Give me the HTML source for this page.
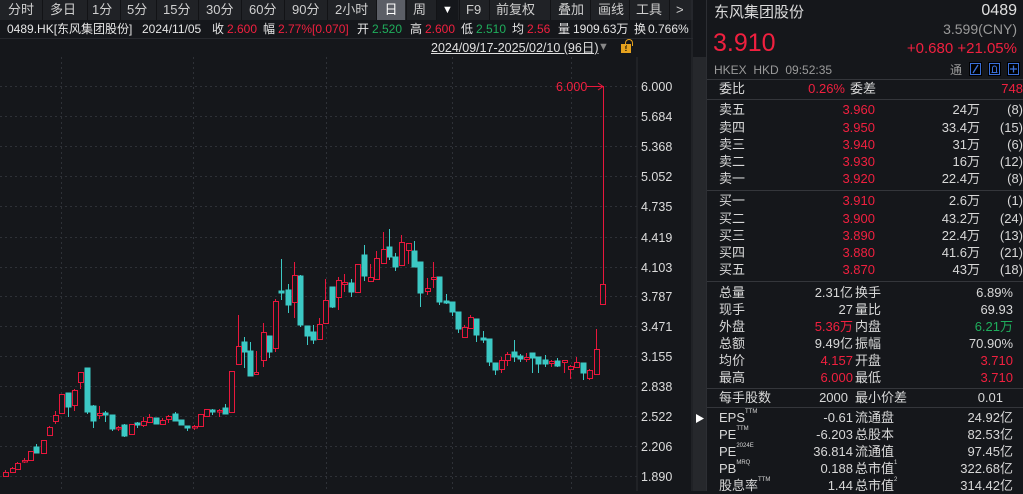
<!DOCTYPE html>
<html><head><meta charset="utf-8"><style>
*{margin:0;padding:0;box-sizing:border-box}
body{width:1023px;height:491px;background:#15171b;overflow:hidden;position:relative;font-family:"Liberation Sans","Noto Sans CJK SC",sans-serif;color:#d8d8d8}
.a{position:absolute;white-space:nowrap}
#tb{position:absolute;left:0;top:0;width:693px;height:20px;background:#202226}
#tb span{position:absolute;top:0;height:20px;line-height:20px;font-size:13px;color:#cfcfcf}
.sep{position:absolute;top:0;width:1px;height:20px;background:#121316}
.r{color:#f0203f}.g{color:#1fae5c}.gr{color:#9a9a9a}
.ib{position:absolute;top:21px;font-size:12px;line-height:16px;color:#e6e6e6;white-space:nowrap}
.ib.r{color:#f0203f}.ib.g{color:#1fae5c}
#ip{position:absolute;left:706px;top:0;width:317px;height:491px;border-left:1px solid #2c2e33;background:#15171b}
#ip .a{font-size:13px;line-height:16px}
.hl{position:absolute;left:0;width:317px;height:1px;background:#34363b}
.rt{text-align:right}
sup{font-size:6px;line-height:6px;vertical-align:top;position:relative;top:-1px}
</style></head><body>
<div id="tb">
<span style="left:8px">分时</span>
<span style="left:50px">多日</span>
<span style="left:92px">1分</span>
<span style="left:127px">5分</span>
<span style="left:163px">15分</span>
<span style="left:206px">30分</span>
<span style="left:249px">60分</span>
<span style="left:292px">90分</span>
<span style="left:335px">2小时</span>
<span style="left:377px;width:28px;background:#5b5e66;text-align:center;color:#fff">日</span>
<span style="left:413px">周</span>
<span style="left:437px;width:21px;text-align:center;background:#15171b;color:#fff;font-size:11px">▼</span>
<span style="left:466px">F9</span>
<span style="left:496px">前复权</span>
<span style="left:558px">叠加</span>
<span style="left:598px">画线</span>
<span style="left:636px">工具</span>
<span style="left:676px">&gt;</span>
<div class="sep" style="left:42px"></div><div class="sep" style="left:87px"></div><div class="sep" style="left:120px"></div><div class="sep" style="left:156px"></div><div class="sep" style="left:198px"></div><div class="sep" style="left:241px"></div><div class="sep" style="left:284px"></div><div class="sep" style="left:327px"></div><div class="sep" style="left:376px"></div><div class="sep" style="left:406px"></div><div class="sep" style="left:436px"></div><div class="sep" style="left:459px"></div><div class="sep" style="left:489px"></div><div class="sep" style="left:550px"></div><div class="sep" style="left:590px"></div><div class="sep" style="left:629px"></div><div class="sep" style="left:669px"></div>
</div>
<div class="ib" style="left:7px">0489.HK[东风集团股份]</div>
<div class="ib" style="left:142px">2024/11/05</div>
<div class="ib" style="left:212px">收</div><div class="ib r" style="left:227px">2.600</div>
<div class="ib" style="left:263px">幅</div><div class="ib r" style="left:278px">2.77%[0.070]</div>
<div class="ib" style="left:357px">开</div><div class="ib g" style="left:372px">2.520</div>
<div class="ib" style="left:410px">高</div><div class="ib r" style="left:425px">2.600</div>
<div class="ib" style="left:461px">低</div><div class="ib g" style="left:476px">2.510</div>
<div class="ib" style="left:512px">均</div><div class="ib r" style="left:527px">2.56</div>
<div class="ib" style="left:558px">量</div><div class="ib" style="left:573px">1909.63万</div>
<div class="ib" style="left:634px">换</div><div class="ib" style="left:648px">0.766%</div>
<div style="position:absolute;left:0;top:38px;width:693px;height:1px;background:#26282d"></div>
<div class="a" style="left:431px;top:40px;font-size:12.5px;line-height:16px;color:#e0e0e0;text-decoration:underline">2024/09/17-2025/02/10 (96日)</div>
<div class="a" style="left:598px;top:41px;font-size:11px;color:#888">▼</div>
<div class="a" style="left:621px;top:44px;width:10px;height:9px;background:#e6a21e;font-size:8px;line-height:9px;text-align:center;color:#000;font-weight:bold">!</div>
<div class="a" style="left:625px;top:39px;width:8px;height:7px;border:1.5px solid #e6a21e;border-bottom:none;border-radius:4px 4px 0 0"></div>

<svg style="position:absolute;left:0;top:0" width="706" height="491">
<rect x="693" y="57" width="13" height="434" fill="#26282c"/>
<path d="M696 414 L704 418.5 L696 423Z" fill="#fff"/>
<line x1="637" y1="57" x2="637" y2="491" stroke="#2a2c31"/>
<line x1="692" y1="0" x2="692" y2="491" stroke="#2a2c31"/>
<g stroke="#2e3137" stroke-dasharray="2,3" stroke-width="1">
<path d="M0 86.5H637M0 116.5H637M0 146.5H637M0 176.5H637M0 206.5H637M0 237.5H637M0 267.5H637M0 296.5H637M0 326.5H637M0 356.5H637M0 386.5H637M0 416.5H637M0 446.5H637M0 476.5H637"/>
<path d="M61.5 57V491M193.5 57V491M326.5 57V491M452.5 57V491M571.5 57V491"/>
</g>
<g font-size="12.5" fill="#dcdcdc" font-family="Liberation Sans,sans-serif">
<text x="641" y="91">6.000</text><text x="641" y="121">5.684</text><text x="641" y="151">5.368</text><text x="641" y="181">5.052</text><text x="641" y="211">4.735</text><text x="641" y="242">4.419</text><text x="641" y="272">4.103</text><text x="641" y="301">3.787</text><text x="641" y="331">3.471</text><text x="641" y="361">3.155</text><text x="641" y="391">2.838</text><text x="641" y="421">2.522</text><text x="641" y="451">2.206</text><text x="641" y="481">1.890</text>
</g>
<text x="556" y="91" font-size="12.5" fill="#f0203f" font-family="Liberation Sans,sans-serif">6.000</text>
<path d="M587 86.5H603M598 83L603 86.5L598 90" stroke="#e8173c" fill="none"/>
<g stroke="#3cc8c4" fill="#3cc8c4" stroke-width="1">
<path d="M36.5 444V453M68.5 393V417M87.5 368V414M93.5 405V428M105.5 411V422M112.5 415V431M124.5 424V437M137.5 422V428M156.5 418V424M175.5 412V421M181.5 420V425M187.5 426V431M212.5 409V415M225.5 404V414M244.5 337V368M250.5 342V376M269.5 336V358M281.5 259V300M288.5 284V313M300.5 275V327M307.5 326V345M313.5 325V344M332.5 287V308M351.5 279V297M364.5 245V281M389.5 229V260M395.5 253V271M414.5 241V267M420.5 262V307M439.5 277V305M446.5 294V304M452.5 302V316M458.5 312V333M476.5 319V342M483.5 331V343M489.5 339V366M495.5 363V375M514.5 340V362M520.5 354V362M532.5 353V373M538.5 357V373M545.5 355V367M557.5 358V367M583.5 363V380"/>
<rect x="34" y="447" width="5" height="6"/><rect x="66" y="393" width="5" height="14"/><rect x="85" y="368" width="5" height="44"/><rect x="91" y="406" width="5" height="15"/><rect x="103" y="413" width="5" height="2"/><rect x="110" y="415" width="5" height="14"/><rect x="122" y="425" width="5" height="11"/><rect x="135" y="423" width="5" height="2"/><rect x="154" y="418" width="5" height="6"/><rect x="173" y="414" width="5" height="7"/><rect x="179" y="420" width="5" height="5"/><rect x="185" y="426" width="5" height="2"/><rect x="210" y="410" width="5" height="2"/><rect x="223" y="408" width="5" height="6"/><rect x="242" y="342" width="5" height="10"/><rect x="248" y="351" width="5" height="25"/><rect x="267" y="336" width="5" height="16"/><rect x="279" y="291" width="5" height="2"/><rect x="286" y="290" width="5" height="15"/><rect x="298" y="276" width="5" height="49"/><rect x="305" y="326" width="5" height="10"/><rect x="311" y="332" width="5" height="8"/><rect x="330" y="287" width="5" height="20"/><rect x="349" y="283" width="5" height="9"/><rect x="362" y="255" width="5" height="21"/><rect x="387" y="247" width="5" height="10"/><rect x="393" y="257" width="5" height="10"/><rect x="412" y="251" width="5" height="16"/><rect x="418" y="262" width="5" height="31"/><rect x="437" y="277" width="5" height="25"/><rect x="444" y="301" width="5" height="2"/><rect x="450" y="302" width="5" height="10"/><rect x="456" y="312" width="5" height="17"/><rect x="474" y="319" width="5" height="16"/><rect x="481" y="338" width="5" height="2"/><rect x="487" y="339" width="5" height="23"/><rect x="493" y="363" width="5" height="7"/><rect x="512" y="352" width="5" height="5"/><rect x="518" y="356" width="5" height="3"/><rect x="530" y="353" width="5" height="5"/><rect x="536" y="357" width="5" height="7"/><rect x="543" y="360" width="5" height="4"/><rect x="555" y="361" width="5" height="5"/><rect x="581" y="363" width="5" height="10"/>
</g>
<g stroke="#e8173c" fill="#15171b" stroke-width="1">
<path d="M5.5 470V477M12.5 467V473M17.5 462V470M24.5 458V463M30.5 451V460M43.5 440V453M49.5 426V436M55.5 411V424M61.5 394V413M74.5 389V411M80.5 372V389M99.5 406V419M118.5 426V431M131.5 424V435M143.5 417V427M149.5 414V423M162.5 418V425M168.5 415V423M194.5 425V430M200.5 414V426M206.5 409V417M219.5 409V417M231.5 371V412M238.5 315V364M256.5 351V375M263.5 323V367M275.5 299V352M294.5 262V318M319.5 318V340M325.5 279V323M338.5 277V310M344.5 274V292M357.5 264V292M370.5 264V282M376.5 251V280M383.5 232V263M401.5 235V266M408.5 243V264M427.5 278V295M433.5 262V288M464.5 325V338M470.5 315V329M501.5 357V373M507.5 352V366M526.5 353V362M551.5 360V367M564.5 360V373M570.5 365V379M576.5 357V368M589.5 369V380M596.5 329V375M603.5 86V304"/>
<rect x="3.5" y="472.5" width="5" height="4"/><rect x="10.5" y="468.5" width="5" height="4"/><rect x="15.5" y="463.5" width="5" height="6"/><rect x="22.5" y="460.5" width="5" height="1.5"/><rect x="28.5" y="451.5" width="5" height="9"/><rect x="41.5" y="440.5" width="5" height="13"/><rect x="47.5" y="427.5" width="5" height="8"/><rect x="53.5" y="415.5" width="5" height="6"/><rect x="59.5" y="394.5" width="5" height="19"/><rect x="72.5" y="390.5" width="5" height="15"/><rect x="78.5" y="372.5" width="5" height="10"/><rect x="97.5" y="413.5" width="5" height="2"/><rect x="116.5" y="427.5" width="5" height="1.5"/><rect x="129.5" y="424.5" width="5" height="10"/><rect x="141.5" y="421.5" width="5" height="4"/><rect x="147.5" y="417.5" width="5" height="5"/><rect x="160.5" y="420.5" width="5" height="4"/><rect x="166.5" y="416.5" width="5" height="3"/><rect x="192.5" y="426.5" width="5" height="1.5"/><rect x="198.5" y="414.5" width="5" height="12"/><rect x="204.5" y="409.5" width="5" height="7"/><rect x="217.5" y="410.5" width="5" height="1.5"/><rect x="229.5" y="371.5" width="5" height="41"/><rect x="236.5" y="346.5" width="5" height="18"/><rect x="254.5" y="372.5" width="4" height="2"/><rect x="261.5" y="332.5" width="5" height="28"/><rect x="273.5" y="301.5" width="5" height="47"/><rect x="292.5" y="275.5" width="5" height="27"/><rect x="317.5" y="324.5" width="5" height="15"/><rect x="323.5" y="300.5" width="5" height="23"/><rect x="336.5" y="280.5" width="5" height="17"/><rect x="342.5" y="282.5" width="5" height="2"/><rect x="355.5" y="264.5" width="5" height="28"/><rect x="368.5" y="277.5" width="5" height="4"/><rect x="374.5" y="258.5" width="5" height="21"/><rect x="381.5" y="249.5" width="5" height="14"/><rect x="399.5" y="242.5" width="5" height="23"/><rect x="406.5" y="243.5" width="5" height="7"/><rect x="425.5" y="288.5" width="5" height="3"/><rect x="431.5" y="277.5" width="5" height="2"/><rect x="462.5" y="327.5" width="5" height="10"/><rect x="468.5" y="317.5" width="5" height="11"/><rect x="499.5" y="360.5" width="5" height="9"/><rect x="505.5" y="354.5" width="5" height="6"/><rect x="524.5" y="357.5" width="5" height="2"/><rect x="549.5" y="361.5" width="5" height="2"/><rect x="562.5" y="360.5" width="5" height="2"/><rect x="568.5" y="366.5" width="5" height="3"/><rect x="574.5" y="362.5" width="5" height="5"/><rect x="587.5" y="370.5" width="5" height="8"/><rect x="594.5" y="349.5" width="5" height="25"/><rect x="600.5" y="284.5" width="5" height="20"/>
</g>
</svg>

<div id="ip">
<div class="a" style="left:7px;top:4px;font-size:15px!important;line-height:18px!important;color:#dcdcdc">东风集团股份</div>
<div class="a rt" style="right:6px;top:2px;font-size:16px!important;line-height:18px!important;color:#e0e0e0">0489</div>
<div class="a r" style="left:6px;top:28px;font-size:25px!important;line-height:30px!important">3.910</div>
<div class="a rt gr" style="right:6px;top:21px;font-size:14px!important">3.599(CNY)</div>
<div class="a rt r" style="right:6px;top:41px;font-size:15px!important">+0.680 +21.05%</div>
<div class="a gr" style="left:7px;top:62px;font-size:12px!important">HKEX&nbsp; HKD&nbsp; 09:52:35</div>
<div class="a gr" style="left:243px;top:62px;font-size:12px!important">通</div>
<svg class="a" style="left:262px;top:62px" width="55" height="14">
<rect x="0" y="0" width="13" height="14" fill="#000"/><rect x="1.5" y="1.5" width="10" height="11" fill="none" stroke="#3a6fd8"/><path d="M4 11L9 3" stroke="#3a6fd8" stroke-width="1.3"/>
<rect x="19" y="0" width="13" height="14" fill="#000"/><rect x="20.5" y="1.5" width="10" height="11" fill="none" stroke="#3a6fd8"/><path d="M22.5 10.5H28.5M23.5 10V6A2 2 0 0 1 27.5 6V10" stroke="#3a6fd8" fill="none"/>
<rect x="38" y="0" width="13" height="14" fill="#000"/><rect x="39.5" y="1.5" width="10" height="11" fill="none" stroke="#3a6fd8"/><path d="M44.5 3.5V10.5M41 7H48" stroke="#3a6fd8" stroke-width="1.3"/>
</svg>
<div class="hl" style="top:79px"></div>
<div class="a" style="left:12px;top:81px">委比</div><div class="a r rt" style="right:178px;top:81px">0.26%</div><div class="a" style="left:143px;top:81px">委差</div><div class="a r rt" style="right:0;top:81px">748</div>
<div class="hl" style="top:99px"></div>

<div class="a" style="left:12px;top:102px">卖五</div><div class="a r rt" style="right:148px;top:102px">3.960</div><div class="a rt" style="right:43px;top:102px">24万</div><div class="a rt" style="right:0;top:102px">(8)</div>
<div class="a" style="left:12px;top:120px">卖四</div><div class="a r rt" style="right:148px;top:120px">3.950</div><div class="a rt" style="right:43px;top:120px">33.4万</div><div class="a rt" style="right:0;top:120px">(15)</div>
<div class="a" style="left:12px;top:137px">卖三</div><div class="a r rt" style="right:148px;top:137px">3.940</div><div class="a rt" style="right:43px;top:137px">31万</div><div class="a rt" style="right:0;top:137px">(6)</div>
<div class="a" style="left:12px;top:154px">卖二</div><div class="a r rt" style="right:148px;top:154px">3.930</div><div class="a rt" style="right:43px;top:154px">16万</div><div class="a rt" style="right:0;top:154px">(12)</div>
<div class="a" style="left:12px;top:171px">卖一</div><div class="a r rt" style="right:148px;top:171px">3.920</div><div class="a rt" style="right:43px;top:171px">22.4万</div><div class="a rt" style="right:0;top:171px">(8)</div>
<div class="hl" style="top:190px"></div>
<div class="a" style="left:12px;top:193px">买一</div><div class="a r rt" style="right:148px;top:193px">3.910</div><div class="a rt" style="right:43px;top:193px">2.6万</div><div class="a rt" style="right:0;top:193px">(1)</div>
<div class="a" style="left:12px;top:211px">买二</div><div class="a r rt" style="right:148px;top:211px">3.900</div><div class="a rt" style="right:43px;top:211px">43.2万</div><div class="a rt" style="right:0;top:211px">(24)</div>
<div class="a" style="left:12px;top:228px">买三</div><div class="a r rt" style="right:148px;top:228px">3.890</div><div class="a rt" style="right:43px;top:228px">22.4万</div><div class="a rt" style="right:0;top:228px">(13)</div>
<div class="a" style="left:12px;top:245px">买四</div><div class="a r rt" style="right:148px;top:245px">3.880</div><div class="a rt" style="right:43px;top:245px">41.6万</div><div class="a rt" style="right:0;top:245px">(21)</div>
<div class="a" style="left:12px;top:262px">买五</div><div class="a r rt" style="right:148px;top:262px">3.870</div><div class="a rt" style="right:43px;top:262px">43万</div><div class="a rt" style="right:0;top:262px">(18)</div>
<div class="hl" style="top:281px"></div>

<div class="a" style="left:12px;top:285px">总量</div><div class="a rt" style="right:170px;top:285px">2.31亿</div><div class="a" style="left:148px;top:285px">换手</div><div class="a rt" style="right:10px;top:285px">6.89%</div>
<div class="a" style="left:12px;top:302px">现手</div><div class="a rt" style="right:170px;top:302px">27</div><div class="a" style="left:148px;top:302px">量比</div><div class="a rt" style="right:10px;top:302px">69.93</div>
<div class="a" style="left:12px;top:319px">外盘</div><div class="a rt r" style="right:170px;top:319px">5.36万</div><div class="a" style="left:148px;top:319px">内盘</div><div class="a rt g" style="right:10px;top:319px">6.21万</div>
<div class="a" style="left:12px;top:336px">总额</div><div class="a rt" style="right:170px;top:336px">9.49亿</div><div class="a" style="left:148px;top:336px">振幅</div><div class="a rt" style="right:10px;top:336px">70.90%</div>
<div class="a" style="left:12px;top:353px">均价</div><div class="a rt r" style="right:170px;top:353px">4.157</div><div class="a" style="left:148px;top:353px">开盘</div><div class="a rt r" style="right:10px;top:353px">3.710</div>
<div class="a" style="left:12px;top:370px">最高</div><div class="a rt r" style="right:170px;top:370px">6.000</div><div class="a" style="left:148px;top:370px">最低</div><div class="a rt r" style="right:10px;top:370px">3.710</div>
<div class="hl" style="top:388px"></div>
<div class="a" style="left:12px;top:390px">每手股数</div><div class="a rt" style="right:175px;top:390px">2000</div><div class="a" style="left:148px;top:390px">最小价差</div><div class="a rt" style="right:20px;top:390px">0.01</div>
<div class="hl" style="top:407px"></div>
<div class="a" style="left:12px;top:410px">EPS<sup>TTM</sup></div><div class="a rt" style="right:170px;top:410px">-0.61</div><div class="a" style="left:148px;top:410px">流通盘</div><div class="a rt" style="right:10px;top:410px">24.92亿</div>
<div class="a" style="left:12px;top:427px">PE<sup>TTM</sup></div><div class="a rt" style="right:170px;top:427px">-6.203</div><div class="a" style="left:148px;top:427px">总股本</div><div class="a rt" style="right:10px;top:427px">82.53亿</div>
<div class="a" style="left:12px;top:444px">PE<sup>2024E</sup></div><div class="a rt" style="right:170px;top:444px">36.814</div><div class="a" style="left:148px;top:444px">流通值</div><div class="a rt" style="right:10px;top:444px">97.45亿</div>
<div class="a" style="left:12px;top:461px">PB<sup>MRQ</sup></div><div class="a rt" style="right:170px;top:461px">0.188</div><div class="a" style="left:148px;top:461px">总市值<sup>1</sup></div><div class="a rt" style="right:10px;top:461px">322.68亿</div>
<div class="a" style="left:12px;top:478px">股息率<sup>TTM</sup></div><div class="a rt" style="right:170px;top:478px">1.44</div><div class="a" style="left:148px;top:478px">总市值<sup>2</sup></div><div class="a rt" style="right:10px;top:478px">314.42亿</div>
</div>
</body></html>
